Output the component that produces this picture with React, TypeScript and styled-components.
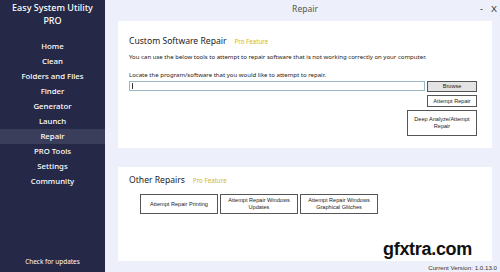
import React from 'react';
import styled, { createGlobalStyle } from 'styled-components';

const GlobalStyle = createGlobalStyle`
    html, body {
        margin: 0;
        padding: 0;
    }
    body {
        font-family: 'Noto Sans', 'Open Sans', sans-serif;
        background: #edf0fa;
    }
`;

const Window = styled.div`
    display: flex;
    width: 500px;
    height: 272px;
    overflow: hidden;
    position: relative;
`;

const Sidebar = styled.div`
    width: 105px;
    flex-shrink: 0;
    background-color: #252846;
    color: #ffffff;
    display: flex;
    flex-direction: column;
`;

const Brand = styled.div`
    text-align: center;
    font-size: 9px;
    font-weight: 500;
    line-height: 13px;
    padding-top: 1px;
    height: 38px;
`;

const Menu = styled.div`
    display: flex;
    flex-direction: column;
`;

const MenuItem = styled.div<{ active?: boolean }>`
    height: 15px;
    line-height: 15px;
    text-align: center;
    font-size: 7.8px;
    font-weight: 500;
    background-color: ${(props) => (props.active ? '#3b3e5b' : 'transparent')};
`;

const UpdateLink = styled.div`
    margin-top: auto;
    text-align: center;
    font-size: 6.4px;
    padding-bottom: 6px;
`;

const Main = styled.div`
    flex: 1;
    display: flex;
    flex-direction: column;
    padding: 0 8px 0 13px;
`;

const TitleBar = styled.div`
    height: 21px;
    position: relative;
    display: flex;
    align-items: center;
    justify-content: center;
`;

const PageTitle = styled.span`
    font-size: 8.5px;
    color: #555;
    margin-top: -5px;
`;

const WindowControls = styled.div`
    position: absolute;
    right: -5px;
    top: 4px;
    display: flex;
    gap: 8px;
    font-size: 9px;
    color: #333;
    font-family: 'Liberation Sans', sans-serif;
`;

const Card = styled.div<{ height: number; top: number }>`
    background: #ffffff;
    height: ${(props) => props.height}px;
    box-sizing: border-box;
    padding: ${(props) => props.top}px 15px 0 11px;
    display: flex;
    flex-direction: column;
`;

const CardTitle = styled.div`
    display: flex;
    align-items: baseline;
    gap: 8px;
    font-size: 8.6px;
    color: #222;
    height: 14px;
`;

const ProTag = styled.span`
    font-size: 6.2px;
    color: #d6b520;
`;

const Text = styled.div<{ top: number }>`
    font-size: 6.05px;
    color: #222;
    margin-top: ${(props) => props.top}px;
    white-space: nowrap;
`;

const InputRow = styled.div`
    display: flex;
    gap: 2px;
    margin-top: 2px;
`;

const PathInput = styled.div`
    flex: 1;
    height: 10px;
    box-sizing: border-box;
    border: 1px solid #9ab7c6;
    position: relative;
    &::before {
        content: '';
        position: absolute;
        left: 2px;
        top: 1px;
        width: 1px;
        height: 6px;
        background: #333;
    }
`;

const Button = styled.div<{ width: number; height: number; gray?: boolean }>`
    width: ${(props) => props.width}px;
    height: ${(props) => props.height}px;
    box-sizing: border-box;
    border: 1px solid #555;
    background: ${(props) => (props.gray ? '#e3e3e3' : '#ffffff')};
    font-family: 'Liberation Sans', Arial, sans-serif;
    font-size: 5.6px;
    color: #222;
    display: flex;
    align-items: center;
    justify-content: center;
    text-align: center;
    line-height: 7px;
    flex-shrink: 0;
`;

const ButtonStack = styled.div`
    display: flex;
    flex-direction: column;
    align-items: flex-end;
    gap: 3px;
    margin-top: 3px;
`;

const RepairRow = styled.div`
    display: flex;
    gap: 2px;
    margin: 6px 0 0 11px;
`;

const Gap = styled.div`
    height: 19px;
    flex-shrink: 0;
`;

const Version = styled.div`
    font-family: 'Liberation Sans', Arial, sans-serif;
    font-size: 6.2px;
    color: #333;
    text-align: right;
    margin: 3px -5px 0 0;
`;

const Watermark = styled.div`
    position: absolute;
    left: 383px;
    top: 239px;
    font-family: 'Liberation Sans', Arial, sans-serif;
    font-size: 18px;
    font-weight: bold;
    color: #111;
    letter-spacing: -0.3px;
`;

const menuItems = [
    'Home',
    'Clean',
    'Folders and Files',
    'Finder',
    'Generator',
    'Launch',
    'Repair',
    'PRO Tools',
    'Settings',
    'Community',
];

const App = (): JSX.Element => {
    return (
        <>
            <GlobalStyle />
            <Window>
                <Sidebar>
                    <Brand>
                        Easy System Utility
                        <br />
                        PRO
                    </Brand>
                    <Menu>
                        {menuItems.map((item) => (
                            <MenuItem key={item} active={item === 'Repair'}>
                                {item}
                            </MenuItem>
                        ))}
                    </Menu>
                    <UpdateLink>Check for updates</UpdateLink>
                </Sidebar>
                <Main>
                    <TitleBar>
                        <PageTitle>Repair</PageTitle>
                        <WindowControls>
                            <span>-</span>
                            <span>X</span>
                        </WindowControls>
                    </TitleBar>
                    <Card height={127} top={14}>
                        <CardTitle>
                            Custom Software Repair
                            <ProTag>Pro Feature</ProTag>
                        </CardTitle>
                        <Text top={4}>
                            You can use the below tools to attempt to repair software that is not working correctly on your computer.
                        </Text>
                        <Text top={10}>Locate the program/software that you would like to attempt to repair.</Text>
                        <InputRow>
                            <PathInput />
                            <Button width={50} height={11} gray>
                                Browse
                            </Button>
                        </InputRow>
                        <ButtonStack>
                            <Button width={50} height={12}>
                                Attempt Repair
                            </Button>
                            <Button width={70} height={26}>
                                Deep Analyze/Attempt
                                <br />
                                Repair
                            </Button>
                        </ButtonStack>
                    </Card>
                    <Gap />
                    <Card height={94} top={7}>
                        <CardTitle>
                            Other Repairs
                            <ProTag>Pro Feature</ProTag>
                        </CardTitle>
                        <RepairRow>
                            <Button width={78} height={20}>
                                Attempt Repair Printing
                            </Button>
                            <Button width={78} height={20}>
                                Attempt Repair Windows
                                <br />
                                Updates
                            </Button>
                            <Button width={78} height={20}>
                                Attempt Repair Windows
                                <br />
                                Graphical Glitches
                            </Button>
                        </RepairRow>
                    </Card>
                    <Version>Current Version: 1.0.13.0</Version>
                </Main>
                <Watermark>gfxtra.com</Watermark>
            </Window>
        </>
    );
};

export default App;
